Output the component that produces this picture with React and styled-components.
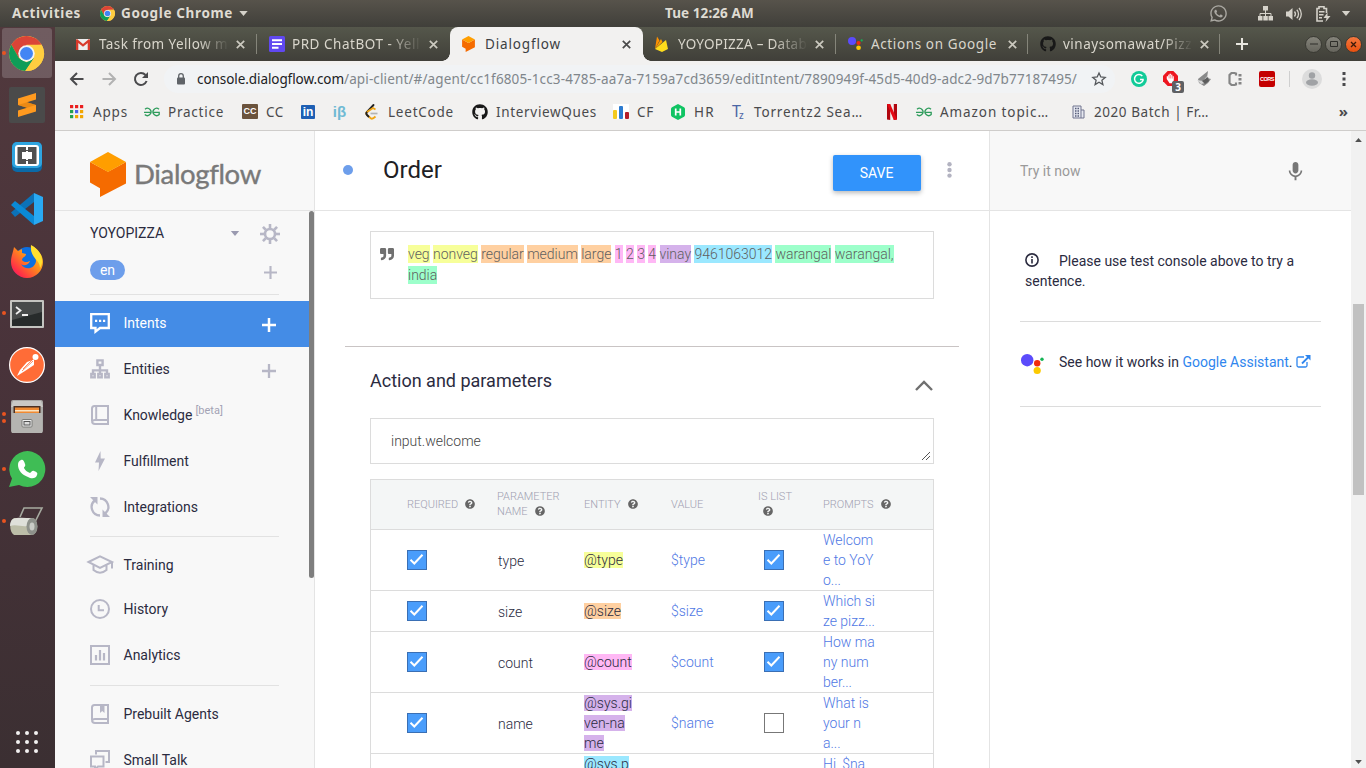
import React, { useLayoutEffect, useRef, useState } from "react";
import styled, { createGlobalStyle, css } from "styled-components";
import { FaGithub, FaQuestionCircle, FaQuoteRight, FaWhatsapp } from "react-icons/fa";
import { MdMic } from "react-icons/md";

const Global = createGlobalStyle`
  * { box-sizing: border-box; }
  body { margin: 0; overflow: hidden; font-family: Roboto, "Liberation Sans", sans-serif; }
  svg { display: block; flex: none; overflow: visible; }
`;

/* ---------- text that settles to a given width ---------- */
const FitSpan = styled.span`
  display: inline-block;
  white-space: pre;
  flex: none;
`;
function Fit({ w, children, ...rest }) {
  const ref = useRef(null);
  const [spacing, setSpacing] = useState(0);
  useLayoutEffect(() => {
    const el = ref.current;
    const n = el.textContent.length;
    setSpacing((w - el.getBoundingClientRect().width) / n);
  }, [w]);
  return (
    <FitSpan ref={ref} style={{ letterSpacing: spacing }} {...rest}>
      {children}
    </FitSpan>
  );
}

/* ---------- desktop ---------- */
const Desktop = styled.div`
  width: 1366px;
  height: 768px;
  overflow: hidden;
  display: flex;
  flex-direction: column;
  background: #fff;
`;
const TopBar = styled.header`
  height: 27px;
  flex: none;
  display: grid;
  grid-template-columns: 665px 94px 1fr;
  align-items: center;
  background: linear-gradient(#57534b, #403f3a);
  color: #dfdbd2;
  font: bold 13.5px/27px "Noto Sans", "Open Sans", sans-serif;
`;
const BarLeft = styled.div`
  display: flex;
  align-items: center;
  padding-left: 12px;
`;
const AppMenu = styled.div`
  display: flex;
  align-items: center;
  gap: 6px;
  margin-left: 19px;
`;
const Tray = styled.div`
  display: flex;
  align-items: center;
  justify-content: flex-end;
  padding-right: 15px;
  color: #d5d2ca;
  & > :nth-child(1) { margin-right: 30px; color: #aaa8a2; }
  & > :nth-child(2) { margin-right: 13px; }
  & > :nth-child(3) { margin-right: 14px; }
  & > :nth-child(4) { margin-right: 10px; }
`;
const Below = styled.div`
  flex: 1;
  min-height: 0;
  display: flex;
`;
const Dock = styled.nav`
  width: 55px;
  flex: none;
  display: flex;
  flex-direction: column;
  justify-content: space-between;
  background: linear-gradient(#51393d, #49333a 45%, #3b2f32);
`;
const DockList = styled.div`
  display: flex;
  flex-direction: column;
`;
const DockSlot = styled.div`
  height: 52px;
  display: grid;
  grid-template-columns: 6px 1fr;
  align-items: center;
  position: relative;
  ${(p) =>
    p.$active &&
    css`
      &::before {
        content: "";
        position: absolute;
        inset: 1px 3px 1px 2px;
        border-radius: 3px;
        background: rgba(255, 255, 255, 0.18);
      }
    `}
  & > svg { position: relative; margin-left: 3px; }
`;
const Dots = styled.div`
  position: relative;
  display: flex;
  flex-direction: column;
  gap: 3px;
  padding-left: 2px;
`;
const Dot = styled.i`
  width: 4px;
  height: 4px;
  border-radius: 50%;
  background: #e95420;
`;
const AppsGrid = styled.div`
  display: grid;
  grid-template-columns: repeat(3, 4.4px);
  grid-auto-rows: 4.4px;
  gap: 4.6px;
  padding: 0 0 15px 16px;
  & i { background: #f3f1f1; border-radius: 50%; }
`;

/* ---------- browser ---------- */
const Browser = styled.div`
  flex: 1;
  min-width: 0;
  display: flex;
  flex-direction: column;
  font-family: "Noto Sans", "Open Sans", sans-serif;
`;
const TabStrip = styled.div`
  height: 34px;
  flex: none;
  display: flex;
  padding-left: 9px;
  background: linear-gradient(#55574b, #403f39);
`;
const TabBox = styled.div`
  width: ${(p) => p.$w || 193}px;
  flex: none;
  display: flex;
  align-items: center;
  position: relative;
  padding: 0 8px 0 12px;
  color: ${(p) => (p.$active ? "#3c4043" : "#d9d6cc")};
  background: ${(p) => (p.$active ? "#f2f1f0" : "none")};
  border-radius: 8px 8px 0 0;
  font-size: 13.5px;
  ${(p) =>
    p.$active &&
    css`
      &::before, &::after {
        content: "";
        position: absolute;
        bottom: 0;
        width: 8px;
        height: 8px;
      }
      &::before { left: -8px; background: radial-gradient(circle at 0 0, transparent 7.5px, #f2f1f0 8px); }
      &::after { right: -8px; background: radial-gradient(circle at 100% 0, transparent 7.5px, #f2f1f0 8px); }
    `}
  ${(p) => p.$sep && css`
    &::after {
      content: "";
      position: absolute;
      right: 0;
      top: 7px;
      height: 20px;
      width: 1px;
      background: #85857a;
    }
  `}
`;
const Fav = styled.div`
  width: 23px;
  height: 16px;
  flex: none;
  display: flex;
  align-items: center;
`;
const TabTitle = styled.div`
  width: 130px;
  overflow: hidden;
  white-space: nowrap;
  line-height: 20px;
  ${(p) => p.$fade && css`
    mask-image: linear-gradient(90deg, #000 ${p.$fade}px, transparent 130px);
  `}
`;
const CloseX = styled.svg`
  margin-left: 7px;
`;
const NewTab = styled.div`
  width: 85px;
  display: flex;
  align-items: center;
  padding-left: 16px;
`;
const WinButtons = styled.div`
  display: flex;
  align-items: center;
  gap: 3px;
`;
const WinButton = styled.div`
  width: 17px;
  height: 17px;
  border-radius: 50%;
  border: 1px solid #3a3a34;
  display: flex;
  align-items: center;
  justify-content: center;
  background: ${(p) => (p.$close ? "linear-gradient(#f4783f, #e8500f)" : "linear-gradient(#85847b, #66655d)")};
`;
const Toolbar = styled.div`
  height: 36px;
  flex: none;
  display: flex;
  align-items: center;
  background: #f2f1f0;
  padding-left: 14px;
`;
const NavIcons = styled.div`
  display: flex;
  gap: 16px;
  width: 95px;
`;
const Omnibox = styled.div`
  width: 951px;
  height: 28px;
  border-radius: 14px;
  background: #f1f3f5;
  display: flex;
  align-items: center;
  padding: 0 9px 0 12px;
  color: #80868b;
  font-size: 13.5px;
  & > svg:last-child { margin-left: auto; }
`;
const Lock = styled.svg`
  margin-right: 11px;
`;
const Host = styled.span`
  color: #202124;
`;
const Extensions = styled.div`
  flex: 1;
  display: grid;
  grid-template-columns: 32px 33px 32px 31px 30px 13px 40px 1fr;
  align-items: center;
  padding-left: 16px;
`;
const ExtDivider = styled.div`
  width: 1px;
  height: 16px;
  background: #cfcfcf;
`;
const ExtIcon = styled.div`
  position: relative;
  width: 16px;
  height: 16px;
`;
const Badge = styled.span`
  position: absolute;
  left: 9px;
  top: 10px;
  width: 12px;
  height: 12px;
  border-radius: 2px;
  background: #5f6063;
  color: #fff;
  font: bold 10px/12px "Noto Sans", sans-serif;
  text-align: center;
`;
const Cors = styled.div`
  width: 16px;
  height: 16px;
  border-radius: 2px;
  background: #c40000;
  color: #fff;
  font: bold 5.5px/16px "Liberation Sans", sans-serif;
  text-align: center;
  letter-spacing: -0.5px;
`;
const Bookmarks = styled.div`
  height: 34px;
  flex: none;
  display: flex;
  padding: 0 18px 4px 15px;
  background: #f2f1f0;
  border-bottom: 1px solid #cfcdcb;
  color: #4a4a4c;
  font-size: 13.5px;
  align-items: center;
`;
const Bookmark = styled.div`
  width: ${(p) => p.$w}px;
  flex: none;
  display: flex;
  align-items: center;
  height: 20px;
`;
const BookmarkIcon = styled.div`
  width: ${(p) => p.$w || 24}px;
  flex: none;
`;
const More = styled.div`
  margin: -2px 0 0 auto;
  font-size: 15px;
  font-weight: bold;
`;

/* ---------- page ---------- */
const Page = styled.div`
  flex: 1;
  min-height: 0;
  display: flex;
  font-family: Roboto, "Liberation Sans", sans-serif;
  font-size: 14px;
  color: #2b2b3f;
`;
const Sidebar = styled.aside`
  width: 260px;
  flex: none;
  display: flex;
  flex-direction: column;
  background: #f8f8f8;
  border-right: 1px solid #e4e4e4;
`;
const LogoArea = styled.div`
  height: 80px;
  flex: none;
  display: flex;
  border-bottom: 1px solid #e4e4e4;
  padding: 21px 0 0 35px;
  gap: 8px;
  color: #797979;
  font: 27.5px/43px Lato, sans-serif;
  -webkit-text-stroke: 0.4px #797979;
`;
const SideBody = styled.div`
  flex: 1;
  min-height: 0;
  display: flex;
`;
const Menu = styled.div`
  width: 254px;
  flex: none;
  overflow: hidden;
`;
const SideScroll = styled.div`
  width: 5px;
  height: 367px;
  border-radius: 3px;
  background: #7e7e7e;
`;
const AgentRow = styled.div`
  height: ${(p) => p.$h}px;
  display: flex;
  align-items: center;
  padding: 0 29px 0 35px;
`;
const AgentName = styled.div`
  width: 140px;
  margin-top: -2px;
`;
const GearSlot = styled.div`
  width: 20px;
  margin-left: auto;
`;
const AddLanguage = styled.div`
  margin: 4px 3px 0 auto;
`;
const Pill = styled.div`
  width: 35px;
  height: 20px;
  border-radius: 10px;
  background: #6d9eeb;
  color: #fff;
  text-align: center;
  line-height: 20px;
`;
const SideRule = styled.div`
  height: 1px;
  margin: ${(p) => p.$m} 30px ${(p) => p.$b} 35px;
  background: #e2e2e2;
`;
const MenuItem = styled.div`
  height: ${(p) => p.$h || 46}px;
  display: flex;
  align-items: center;
  padding: 0 33px 2px 35px;
  background: ${(p) => (p.$active ? "#448ce6" : "none")};
  color: ${(p) => (p.$active ? "#fff" : "#b7b7c6")};
`;
const MenuLabel = styled.div`
  display: flex;
  align-items: center;
  flex: 1;
  margin-left: 13.5px;
  color: ${(p) => (p.$active ? "#fff" : "#2b2b3f")};
`;
const MenuAdd = styled.div`
  padding-top: 3px;
`;
const Beta = styled.sup`
  margin: -8px 0 0 3px;
  font-size: 11px;
  line-height: 12px;
  color: #a3a3b5;
`;
const Main = styled.main`
  width: 675px;
  flex: none;
  display: flex;
  flex-direction: column;
  border-right: 1px solid #e4e4e4;
  background: #fff;
`;
const MainHead = styled.div`
  height: 80px;
  flex: none;
  display: flex;
  align-items: center;
  padding: 0 0 1px 28px;
  border-bottom: 1px solid #e4e4e4;
`;
const StatusDot = styled.div`
  width: 10px;
  height: 10px;
  border-radius: 50%;
  background: #6d9eeb;
`;
const IntentName = styled.h1`
  width: 450px;
  margin: 0 0 0 30px;
  font-size: 24px;
  font-weight: 400;
  line-height: 30px;
  color: #202024;
`;
const Save = styled.button`
  width: 88px;
  height: 36px;
  margin-top: 6px;
  padding: 0 1px 0 0;
  border: 0;
  border-radius: 2px;
  background: #3193fb;
  color: #fff;
  font: 14px Roboto, sans-serif;
  box-shadow: 0 2px 5px rgba(0, 0, 0, 0.28);
`;
const Kebab = styled.svg`
  margin-left: 26px;
`;
const MainBody = styled.div`
  flex: 1;
  min-height: 0;
  overflow: hidden;
  padding: 20px 55px 0;
`;
const Phrase = styled.div`
  height: 68px;
  display: flex;
  padding: 12px 20px 0 9px;
  border: 1px solid #dcdcdc;
  font-weight: 300;
  line-height: 21px;
  letter-spacing: -0.015px;
  color: #5f5f5f;
  & > svg { margin: 3px 14px 0 0; }
`;
const PhraseText = styled.div`
  width: 500px;
`;
const Mark = styled.span`
  background: ${(p) => p.$c};
  padding: ${(p) => (p.$tight ? 0 : "1px 0")};
`;
const SectionRule = styled.div`
  height: 1px;
  margin: 47px -25px 0;
  background: #c9c4c4;
`;
const SectionHead = styled.div`
  height: 71px;
  display: flex;
  justify-content: space-between;
  padding: 22px 1px 0 0;
  font-size: 18px;
  line-height: 24px;
  & > svg { margin-top: 11px; }
`;
const ActionField = styled.div`
  height: 46px;
  display: flex;
  align-items: flex-end;
  justify-content: space-between;
  border: 1px solid #dcdcdc;
  padding: 0 3px 3px 20px;
  font-weight: 300;
  line-height: 37px;
  color: #444;
`;
const Table = styled.div`
  margin-top: 15px;
  border: 1px solid #dcdcdc;
`;
const Row = styled.div`
  height: ${(p) => p.$h}px;
  display: grid;
  grid-template-columns: 90px 87px 87px 87px 65px 1fr;
  align-items: center;
  padding-left: 36px;
  border-bottom: 1px solid #dcdcdc;
  font-weight: 300;
  line-height: 20px;
  color: #2b2b3f;
`;
const HeadRow = styled(Row)`
  background: #f4f6f6;
  color: #a5a5b5;
  font-size: 11px;
  line-height: 15px;
`;
const HeadCell = styled.div`
  display: flex;
  flex-wrap: wrap;
  align-items: center;
  color: #a0a0b1;
  & svg { display: inline-block; vertical-align: -1px; margin-left: ${(p) => (p.$wrap ? 5 : 7)}px; color: #666; }
  & > div { width: 80px; margin-top: -2px; }
`;
const Cell = styled.div`
  padding: ${(p) => p.$pad || 0};
`;
const EntityCell = styled.div`
  width: 50px;
  white-space: pre;
`;
const Blue = styled.div`
  white-space: pre;
  color: #4f78e4;
`;
const Check = styled.div`
  width: 20px;
  height: 20px;
  margin-left: ${(p) => p.$ml || 0}px;
  border: 1px solid ${(p) => (p.$on ? "#3a6fb4" : "#777")};
  background: ${(p) => (p.$on ? "#4a9dfb" : "#fff")};
`;
const TryPanel = styled.section`
  width: 361px;
  flex: none;
  background: #fff;
`;
const TryHead = styled.div`
  height: 80px;
  display: flex;
  align-items: center;
  justify-content: space-between;
  padding: 0 44px 0 30px;
  background: #f8f8f8;
  border-bottom: 1px solid #e4e4e4;
  color: #9a9a9a;
  & > svg { margin-top: 2px; }
`;
const TryBody = styled.div`
  padding: 40px 30px 0;
  line-height: 20px;
`;
const Hint = styled.div`
  height: 70px;
  padding-left: 5px;
  & svg { display: inline-block; vertical-align: -1px; margin-right: 20px; }
`;
const TryRow = styled.div`
  height: 86px;
  display: flex;
  align-items: center;
  border: solid #dcdcdc;
  border-width: 1px 0;
  padding-bottom: 4px;
  white-space: pre;
  & > svg:first-child { margin: 3px 15px 0 1px; }
  & > svg:last-child { margin: 0 0 2px 3px; }
`;
const Link = styled.a`
  color: #2f86ee;
`;
const PageScroll = styled.div`
  width: 15px;
  flex: none;
  display: flex;
  flex-direction: column;
  align-items: center;
  background: #f1f1f1;
  padding: 7px 0 4px;
  & > svg:last-child { margin-top: auto; }
`;
const Thumb = styled.div`
  width: 11px;
  height: 191px;
  margin-top: 162px;
  background: #c1c1c1;
`;

/* ---------- drawings ---------- */
const Chrome = ({ s }) => (
  <svg width={s} height={s} viewBox="0 0 34 34">
    <circle cx="17" cy="17" r="17" fill="#f9c940" />
    <path d="M2.3 8.5A17 17 0 0 1 31.7 8.5L17 9.3 9.6 21.3z" fill="#db4437" />
    <path d="M2.3 8.5A17 17 0 0 0 15.8 34L24.4 21.3 17 25.5 9.6 21.3z" fill="#0f9d58" />
    <path d="M31.7 8.5H17V17L24.4 21.3 15.8 34A17 17 0 0 0 31.7 8.5z" fill="#ffcd40" />
    <circle cx="17" cy="17" r="8" fill="#f4f4f4" />
    <circle cx="17" cy="17" r="6.3" fill="#4285f4" />
  </svg>
);
const Sublime = () => (
  <svg width="36" height="36" viewBox="0 0 36 36">
    <rect width="36" height="36" rx="2" fill="#4a4a4a" />
    <path d="M9 11.5 27 6v6.5L18 15.3l9 2.7v6.5L9 30v-6.5l9-2.8-9-2.7z" fill="#ff9a1f" />
    <path d="m9 18 9-2.7 9 2.7-9 2.7z" fill="#e07e0d" opacity=".6" />
  </svg>
);
const Brackets = () => (
  <svg width="36" height="32" viewBox="0 0 36 32">
    <rect x="3" y="1" width="30" height="30" rx="5" fill="#0b6aa8" />
    <rect x="3" y="1" width="30" height="26" rx="5" fill="#2fa4df" />
    <rect x="6" y="4" width="24" height="21" rx="3" fill="#fff" />
    <rect x="8.5" y="6" width="19" height="17" fill="#505050" />
    <path d="M13 11h4v-1h2v1h4v7h-4v1h-2v-1h-4z" fill="#fff" />
    <path d="M17 6h2v3h-2zM17 20h2v3h-2z" fill="#fff" />
  </svg>
);
const VsCode = () => (
  <svg width="36" height="34" viewBox="0 0 36 34">
    <path d="m25 1 9 4v24l-9 4z" fill="#29a9f2" />
    <path d="M25 1v9L6 25l-4-4.5z" fill="#0c72b8" />
    <path d="m6 9 19 15v9L2 13z" fill="#0a8ad6" />
  </svg>
);
const Firefox = () => (
  <svg width="36" height="34" viewBox="0 0 36 34">
    <defs>
      <linearGradient id="ff" x1="1" y1="0" x2="0" y2="1">
        <stop offset="0" stopColor="#ffe226" />
        <stop offset=".45" stopColor="#ff8a1c" />
        <stop offset=".8" stopColor="#ff2d48" />
        <stop offset="1" stopColor="#d61590" />
      </linearGradient>
    </defs>
    <circle cx="18" cy="15" r="12" fill="#0d6fe0" />
    <path d="M5 3 9 7l4-2v4l4 1c0 3-4 3-4 6 2 3 6 2 8 1-2 5-7 5-9 3 4 7 14 5 15-3 0-6-6-7-5-15 4 1 7 4 8 6 2 2 4 6 4 10a16 16 0 0 1-32 0C2 12 4 9 5 3z" fill="url(#ff)" />
    <path d="M22 1c4 2 8 6 10 10 2 6 1 10-1 13 0-9-10-9-9-23z" fill="#ffe030" />
  </svg>
);
const Terminal = () => (
  <svg width="36" height="30" viewBox="0 -1 36 30">
    <rect x="1" y="1" width="34" height="28" rx="1" fill="#c4c4c0" />
    <rect x="3" y="3" width="30" height="24" fill="#272b2b" />
    <path d="M3 3h30v10L3 21z" fill="#474a4a" />
    <path d="m7 8 4.5 3.5L7 15M13 16h6" fill="none" stroke="#eee" strokeWidth="1.8" />
  </svg>
);
const Postman = () => (
  <svg width="36" height="36" viewBox="0 0 36 36">
    <circle cx="18" cy="18" r="17.4" fill="#ff6c37" stroke="#fff" strokeWidth="1.2" />
    <circle cx="26.5" cy="10" r="3" fill="#fff" />
    <path d="m25 12.500-7 2.500-7 8-3 6 8-5 9-6z" fill="#fff" />
    <path d="m14 22 9-9M13 24l11-10" stroke="#ff6c37" strokeWidth=".8" />
  </svg>
);
const Files = () => (
  <svg width="36" height="36" viewBox="0 0 36 36">
    <rect x="2" y="1" width="32" height="33" rx="2" fill="#aaa9a6" />
    <path d="M4 2h28l2 6H2z" fill="#c9c8c5" />
    <rect x="4.500" y="7" width="27" height="7" fill="#4a3124" />
    <path d="M6 8.500h24V14H6z" fill="#f08a32" />
    <path d="M6 11h24v1.500H6z" fill="#fbe3c0" />
    <path d="M3 14h30v20H3z" fill="#b5b4b1" />
    <rect x="13" y="20.500" width="10" height="7.500" rx="1" fill="#eee" stroke="#7b7b78" />
    <rect x="15" y="22.500" width="6" height="3.500" fill="#ddd" stroke="#555" />
  </svg>
);
const WhatsApp = () => (
  <svg width="36" height="36" viewBox="0 0 36 36">
    <path d="M0 36 3 27.5A18 18 0 1 1 10 34z" fill="#3fbd55" />
    <path d="M12 9c2-1 3 1 4 4 1 2-1 3-1 4 1 2 3 4 6 5 1 0 2-3 4-2 3 1 4 2 3 4-1 4-6 4-9 2C13 24 9 19 9 14c0-3 1-4 3-5z" fill="#fff" />
  </svg>
);
const Roller = () => (
  <svg width="36" height="30" viewBox="0 0 36 30">
    <path d="m11 11 4-9h18l-9 18" fill="none" stroke="#a6aaa0" strokeWidth="1.6" />
    <path d="M5 12h18a5 8 0 0 1 0 17H5C0 26 0 15 5 12z" fill="#bcbda8" />
    <path d="M4 13c4-2 12-1 19-1l-5 8c-5 1-11-2-17 0 0-3 1-6 3-7z" fill="#dfe0da" />
    <ellipse cx="23" cy="20.5" rx="5.5" ry="8.5" fill="#8e918b" />
    <ellipse cx="23" cy="20.5" rx="2.5" ry="4" fill="#c9cbc6" />
  </svg>
);
const Caret = ({ w = 9, h = 5, c = "#d5d2ca", up }) => (
  <svg width={w} height={h} viewBox="0 0 10 6">
    <path d={up ? "M0 6h10L5 0z" : "M0 0h10L5 6z"} fill={c} />
  </svg>
);
const NetworkIcon = () => (
  <svg width="15" height="15" viewBox="0 0 15 15">
    <path d="M5 0h5v4.5H5zM0 10h4.5v4.5H0zM5.3 10h4.5v4.5H5.3zM10.5 10H15v4.5h-4.5z" fill="currentColor" />
    <path d="M7.5 4v6M2 10V7.5h11V10" fill="none" stroke="currentColor" />
  </svg>
);
const Speaker = () => (
  <svg width="16" height="14" viewBox="0 0 16 14">
    <path d="M0 4.5h2.5L6.5 1v12L2.5 9.5H0z" fill="currentColor" />
    <path d="M8.5 4.5a4 4 0 0 1 0 5M10.8 2.8a6 6 0 0 1 0 8.4M13 1a9 9 0 0 1 0 12" fill="none" stroke="currentColor" strokeWidth="1.3" />
  </svg>
);
const Battery = () => (
  <svg width="15" height="16" viewBox="0 0 15 16">
    <path d="M7 15H1V2.5h2V.8h5v1.7h2.5V7" fill="none" stroke="currentColor" strokeWidth="1.6" />
    <path d="M3 5h5.5v1.5H3zM3 8h4.5v1.5H3zM3 11h3v1.5H3zM11.5 6.5 7.5 12h3l-1 4 5-6h-3z" fill="currentColor" />
  </svg>
);
const Gmail = () => (
  <svg width="14" height="11" viewBox="0 0 14 11">
    <rect width="14" height="11" rx="1" fill="#eee" />
    <path d="M0 11V1l1-1 6 5 6-5 1 1v10h-2.3V4L7 7.8 2.3 4v7z" fill="#d93a2b" />
  </svg>
);
const Doc = () => (
  <svg width="16" height="16" viewBox="0 0 16 16">
    <rect width="16" height="16" rx="1.5" fill="#6048f0" />
    <path d="M3 3.2h10v2H3zM3 7h10v2H3zM3 10.8h6.5v2H3z" fill="#fff" />
  </svg>
);
const DfLogo = ({ w, h }) => (
  <svg width={w} height={h} viewBox="0 0 36 45">
    <path d="M0 10 18 19.8 36 10v21.5L10 45V36.2L0 30.5z" fill="#f56b00" />
    <path d="M18 0 36 10 18 20 0 10z" fill="#ff9e00" />
  </svg>
);
const Firebase = () => (
  <svg width="13" height="16" viewBox="0 0 13 16">
    <path d="M0 13 2 .6l2.5 4z" fill="#ff9100" />
    <path d="m0 13 6-10 1.5 3z" fill="#ffa000" />
    <path d="m0 13 11-9 2 9-6 3z" fill="#ffdd1c" />
  </svg>
);
const Assistant = ({ w }) => (
  <svg width={w} height={(w * 20) / 23} viewBox="0 0 23 20">
    <circle cx="6.2" cy="6.2" r="6.2" fill="#5b4bfb" />
    <circle cx="16.2" cy="9.2" r="3.2" fill="#f12b0e" />
    <circle cx="21" cy="5.3" r="1.7" fill="#14b455" />
    <circle cx="16.2" cy="16.5" r="3.6" fill="#fcca00" />
  </svg>
);
const XIcon = ({ c }) => (
  <CloseX width="9" height="9" viewBox="0 0 9 9">
    <path d="m.8.8 7.400 7.400M8.200.8.8 8.200" stroke={c} strokeWidth="1.7" />
  </CloseX>
);
const Plus = ({ s = 14, w = 2, c = "currentColor" }) => (
  <svg width={s} height={s} viewBox="0 0 14 14">
    <path d="M7 0v14M0 7h14" stroke={c} strokeWidth={w} />
  </svg>
);
const Gfg = () => (
  <svg width="16" height="10" viewBox="0 0 16 10">
    <path d="M1 2.2A3.6 3.6 0 1 1 .8 7.5M0 5.3h7.5M15 2.2a3.6 3.6 0 1 0 .2 5.3V5.3H8.5" fill="none" stroke="#2f9c5c" strokeWidth="1.3" />
  </svg>
);
const IconText = styled.div`
  width: ${(p) => p.$w}px;
  height: ${(p) => p.$h || 16}px;
  border-radius: 1px;
  background: ${(p) => p.$bg || "none"};
  color: ${(p) => p.$c || "#fff"};
  font: bold ${(p) => p.$s}px/${(p) => p.$h || 16}px "Liberation Sans", sans-serif;
  text-align: center;
  white-space: nowrap;
`;
const TzIcon = styled.div`
  display: flex;
  align-items: flex-start;
  height: 16px;
  color: #4c66a5;
  font: 16px/15px "Noto Sans", sans-serif;
  & small { font-size: 10px; line-height: 23px; margin-left: -2px; }
`;
const AppsIcon = () => (
  <svg width="13" height="13" viewBox="0 0 13 13">
    {["#ea1f1f", "#ea1f1f", "#ea1f1f", "#24a04d", "#4a63e8", "#f2a600", "#24a04d", "#f2a600", "#f2a600"].map((c, i) => (
      <rect key={i} x={(i % 3) * 5} y={Math.floor(i / 3) * 5} width="3.2" height="3.2" fill={c} />
    ))}
  </svg>
);
const Leet = () => (
  <svg width="14" height="16" viewBox="0 0 14 16">
    <path d="M8.5 1 2 8" fill="none" stroke="#222" strokeWidth="1.9" strokeLinecap="round" />
    <path d="M10.5 5.5 8 4 2 8c-1 1-1 2 0 3l4 3.500c1 .5 2 .5 4.500-2" fill="none" stroke="#f0a514" strokeWidth="1.9" />
    <path d="M2 8c-1 1-1 2 0 3l2 2" fill="none" stroke="#222" strokeWidth="1.9" />
    <path d="M5.500 9.500h7" stroke="#b3b3b3" strokeWidth="1.7" />
  </svg>
);
const CfIcon = () => (
  <svg width="16" height="15" viewBox="0 0 16 15">
    <rect width="16" height="15" fill="#fff" />
    <rect x="0" y="6" width="4" height="9" rx="1" fill="#f3c91d" />
    <rect x="6" y="2" width="4" height="13" rx="1" fill="#2c7bd0" />
    <rect x="12" y="8" width="4" height="7" rx="1" fill="#b41d28" />
  </svg>
);
const Hacker = () => (
  <svg width="14" height="16" viewBox="0 0 14 16">
    <path d="m7 0 6 3.300q1 .7 1 1.700v6q0 1-1 1.700L7 16l-6-3.300Q0 12 0 11V5q0-1 1-1.700z" fill="#10c463" />
    <path d="M4.700 4.500v7M9.300 4.500v7M4.700 8h4.600" stroke="#fff" strokeWidth="1.7" />
  </svg>
);
const Netflix = () => (
  <svg width="10" height="16" viewBox="0 0 10 16">
    <path d="M0 0h3.200v16L0 15.600zM6.800 0H10v15.600l-3.200.4z" fill="#b1060f" />
    <path d="M0 0h3.200L10 15.600 6.800 16z" fill="#e50914" />
  </svg>
);
const Office = () => (
  <svg width="13" height="14" viewBox="0 0 13 14">
    <path d="M1 1h8v12H1zM9 5h3v8H9" fill="#e6e8f0" stroke="#70758f" />
    <path d="M3 3.500h4M3 6h4M3 8.500h4M3 11h4" stroke="#555b78" strokeDasharray="1.5 1" strokeWidth="1.3" />
  </svg>
);
const G = {
  fill: "none",
  stroke: "currentColor",
  strokeWidth: 2,
};
const sideIcons = {
  intents: (
    <svg width="20" height="20" viewBox="0 0 20 20">
      <path d="M1.200 1.200h17.600V15H10l-4.500 3.600V15H1.200z" {...G} strokeWidth="2.3" />
      <path d="M5 6.800h2.200V9H5zM9 6.800h2.200V9H9zM13 6.800h2.200V9H13z" fill="currentColor" />
    </svg>
  ),
  entities: (
    <svg width="20" height="20" viewBox="0 0 20 20">
      <path d="M7.400 1.400h5.200v4.600H7.400zM1.300 15h3.400v3.400H1.300zM8.300 15h3.400v3.400H8.300zM15.300 15h3.400v3.400h-3.400zM10 6.500V15M3 15v-3.600h14V15" {...G} strokeWidth="2.4" />
    </svg>
  ),
  knowledge: (
    <svg width="20" height="20" viewBox="0 0 20 20">
      <path d="M18 15V1H4.500Q2 1 2 3.500V16q0 3 3 3h13v-4H5q-2.500 0-3 2M6.200 1v14" {...G} />
    </svg>
  ),
  fulfillment: (
    <svg width="20" height="20" viewBox="0 0 20 20">
      <path d="M10.500 0 5 11.500h4L8.500 20 15 7.500h-4.300z" fill="currentColor" />
    </svg>
  ),
  integrations: (
    <svg width="20" height="20" viewBox="0 0 20 20">
      <path d="M10 1.500a8.500 8.500 0 0 1 5.300 15M10 18.500a8.500 8.500 0 0 1-5.300-15" {...G} strokeWidth="2.3" />
      <path d="M0 0h7.500v7.500zM20 20h-7.500v-7.500z" fill="currentColor" />
    </svg>
  ),
  training: (
    <svg width="20" height="20" viewBox="0 0 20 20">
      <path d="M-1.500 7 10 1.300 22 7 10 12.800zM22 7v6.500M3.500 9.500V15Q10 20.500 16.500 15V9.500" {...G} />
    </svg>
  ),
  history: (
    <svg width="20" height="20" viewBox="0 0 20 20">
      <circle cx="10" cy="10" r="9" {...G} />
      <path d="M8.700 6v5.200h5.300" {...G} />
    </svg>
  ),
  analytics: (
    <svg width="20" height="20" viewBox="0 0 20 20">
      <path d="M1 1h18v18H1z" {...G} />
      <path d="M6 10v5.500M10 5v10.500M14 8v7.500" {...G} strokeWidth="2.2" />
    </svg>
  ),
  prebuilt: (
    <svg width="20" height="20" viewBox="0 0 20 20">
      <path d="M18 15V1H4.500Q2 1 2 3.500V16q0 3 3 3h13v-4H5q-2.500 0-3 2" {...G} />
      <path d="M10 1h4.500v8L12.200 7 10 9z" fill="currentColor" />
    </svg>
  ),
  talk: (
    <svg width="20" height="20" viewBox="0 0 20 20">
      <path d="M6 4.500V1h13v11h-3.500M1 6.500h12.500v10H8L5 19.500v-3H1z" {...G} />
    </svg>
  ),
};
const Gear = () => (
  <svg width="20" height="20" viewBox="0 0 20 20">
    <g stroke="#b7b7c6" fill="none">
      <circle cx="10" cy="10" r="5" strokeWidth="2.6" />
      {[0, 45, 90, 135, 180, 225, 270, 315].map((a) => (
        <path key={a} d="M10 4V0" strokeWidth="2.6" transform={`rotate(${a} 10 10)`} />
      ))}
    </g>
  </svg>
);

/* ---------- data ---------- */
const tabs = [
  { icon: <Gmail />, title: "Task from Yellow m", w: 129, fade: 100, sep: true },
  { icon: <Doc />, title: "PRD ChatBOT - Yell", w: 128, fade: 95 },
  { icon: <DfLogo w={13} h={16} />, title: "Dialogflow", w: 76, active: true },
  { icon: <Firebase />, title: "YOYOPIZZA – Datab", w: 129, fade: 95, sep: true },
  { icon: <Assistant w={15} />, title: "Actions on Google", w: 126, sep: true },
  { icon: <FaGithub size={16} color="#181818" />, title: "vinaysomawat/Pizz", w: 129, fade: 100, sep: true },
];
const bookmarks = [
  { icon: <AppsIcon />, iw: 23, text: "Apps", tw: 35, w: 74 },
  { icon: <Gfg />, text: "Practice", tw: 56, w: 98 },
  { icon: <IconText $w={16} $h={15} $bg="#6b533c" $s={9}>CC</IconText>, text: "CC", tw: 18, w: 59 },
  { icon: <IconText $w={14} $h={14} $bg="#1e5fb4" $s={12}>in</IconText>, w: 30 },
  { icon: <IconText $w={17} $c="#6fbad4" $s={15}>iβ</IconText>, w: 34 },
  { icon: <Leet />, iw: 23, text: "LeetCode", tw: 66, w: 107 },
  { icon: <FaGithub size={16} color="#181818" />, text: "InterviewQues", tw: 101, w: 141 },
  { icon: <CfIcon />, text: "CF", tw: 17, w: 58 },
  { icon: <Hacker />, iw: 23, text: "HR", tw: 21, w: 61 },
  { icon: <TzIcon>T<small>z</small></TzIcon>, iw: 22, text: "Torrentz2 Sea…", tw: 109, w: 155 },
  { icon: <Netflix />, w: 29 },
  { icon: <Gfg />, text: "Amazon topic…", tw: 109, w: 156 },
  { icon: <Office />, iw: 22, text: "2020 Batch | Fr…", tw: 115, w: 140 },
];
const dock = [
  { icon: <Chrome s={35} />, dots: 1, active: true },
  { icon: <Sublime /> },
  { icon: <Brackets /> },
  { icon: <VsCode /> },
  { icon: <Firefox /> },
  { icon: <Terminal />, dots: 1 },
  { icon: <Postman /> },
  { icon: <Files />, dots: 2 },
  { icon: <WhatsApp />, dots: 1 },
  { icon: <Roller />, dots: 1 },
];
const Y = "#f7ff9a", O = "#ffd0a1", P = "#ffb8f5", V = "#d5b2eb", B = "#9be8ff", N = "#9dffcb";
const phrase = [
  ["veg", Y], ["nonveg", Y], ["regular", O], ["medium", O], ["large", O], ["1", P], ["2", P], ["3", P], ["4", P],
  ["vinay", V], ["9461063012", B], ["warangal", N], ["warangal, india", N],
];
const params = [
  { h: 61, name: "type", entity: "@type", c: Y, value: "$type", list: true, prompt: "Welcom\ne to YoY\no..." },
  { h: 41, name: "size", entity: "@size", c: O, value: "$size", list: true, prompt: "Which si\nze pizz..." },
  { h: 61, name: "count", entity: "@count", c: P, value: "$count", list: true, prompt: "How ma\nny num\nber..." },
  { h: 61, name: "name", entity: "@sys.gi\nven-na\nme", c: V, value: "$name", list: false, prompt: "What is\nyour n\na..." },
];
const Partial = styled(Row)`
  align-items: start;
  border-bottom: 0;
  & > div { grid-row: 1; }
  & > div:first-child { grid-column: 3; }
  & > div:last-child { grid-column: 6; }
`;

const Box = ({ on, ml }) => (
  <Check $on={on} $ml={ml}>
    {on && (
      <svg width="18" height="18" viewBox="0 0 18 18">
        <path d="m2.500 8.800 3.800 3.700 8.200-8.700" fill="none" stroke="#fff" strokeWidth="2" />
      </svg>
    )}
  </Check>
);
const Item = ({ icon, children, active, plus, h }) => (
  <MenuItem $active={active} $h={h}>
    {sideIcons[icon]}
    <MenuLabel $active={active}>{children}</MenuLabel>
    {plus && <MenuAdd><Plus s={14} w={active ? 2.5 : 2.3} /></MenuAdd>}
  </MenuItem>
);
const Help = () => <FaQuestionCircle size={10} />;

export default function App() {
  return (
    <Desktop>
      <Global />
      <TopBar>
        <BarLeft>
          <Fit w={69}>Activities</Fit>
          <AppMenu>
            <Chrome s={15} />
            <Fit w={112}>Google Chrome</Fit>
            <Caret />
          </AppMenu>
        </BarLeft>
        <Fit w={95}>Tue 12:26 AM</Fit>
        <Tray>
          <FaWhatsapp size={19} />
          <NetworkIcon />
          <Speaker />
          <Battery />
          <Caret w={10} />
        </Tray>
      </TopBar>
      <Below>
        <Dock>
          <DockList>
            {dock.map((d, i) => (
              <DockSlot key={i} $active={d.active}>
                <Dots>
                  {Array.from({ length: d.dots || 0 }, (_, k) => <Dot key={k} />)}
                </Dots>
                {d.icon}
              </DockSlot>
            ))}
          </DockList>
          <AppsGrid>{Array.from({ length: 9 }, (_, i) => <i key={i} />)}</AppsGrid>
        </Dock>
        <Browser>
          <TabStrip>
            {tabs.map((t, i) => (
              <TabBox key={t.title} $active={t.active} $sep={t.sep} $w={i > 3 ? 192 : 193}>
                <Fav>{t.icon}</Fav>
                <TabTitle $fade={t.fade}><Fit w={t.w}>{t.title}</Fit></TabTitle>
                <XIcon c={t.active ? "#4a4a4a" : "#cbc9bf"} />
              </TabBox>
            ))}
            <NewTab><Plus s={12} w={2.4} c="#e8e6df" /></NewTab>
            <WinButtons>
              <WinButton><svg width="8" height="8"><path d="M0 4h8" stroke="#2e2e2a" /></svg></WinButton>
              <WinButton><svg width="8" height="7"><path d="M.5.5h7v5h-7z" fill="none" stroke="#2e2e2a" /></svg></WinButton>
              <WinButton $close><svg width="7" height="7"><path d="m1 1 5 5M6 1 1 6" stroke="#3b1a0a" strokeWidth="1.3" /></svg></WinButton>
            </WinButtons>
          </TabStrip>
          <Toolbar>
            <NavIcons>
              <svg width="16" height="16" viewBox="0 0 16 16"><path d="M14.500 8H2.500M8 2 2 8l6 6" fill="none" stroke="#4a4a4c" strokeWidth="2" /></svg>
              <svg width="16" height="16" viewBox="0 0 16 16"><path d="M1.500 8h12M8 2l6 6-6 6" fill="none" stroke="#b2b2b2" strokeWidth="2" /></svg>
              <svg width="16" height="16" viewBox="0 0 16 16"><path d="M13.600 10A6 6 0 1 1 12.500 4" fill="none" stroke="#4a4a4c" strokeWidth="2" /><path d="M15 1v6H9z" fill="#4a4a4c" /></svg>
            </NavIcons>
            <Omnibox>
              <Lock width="10" height="12" viewBox="0 0 10 12">
                <rect x="1" y="4.5" width="8" height="7" rx="1" fill="#5f6368" />
                <path d="M2.700 5V3a2.300 2.300 0 0 1 4.600 0v2" fill="none" stroke="#5f6368" strokeWidth="1.3" />
              </Lock>
              <Host><Fit w={147}>console.dialogflow.com</Fit></Host>
              <Fit w={733}>/api-client/#/agent/cc1f6805-1cc3-4785-aa7a-7159a7cd3659/editIntent/7890949f-45d5-40d9-adc2-9d7b77187495/</Fit>
              <svg width="14" height="14" viewBox="0 0 14 14"><path d="m7 1 1.800 4 4.400.4-3.300 2.900 1 4.300L7 10.300l-3.900 2.300 1-4.300L.8 5.400 5.200 5z" fill="none" stroke="#55585c" strokeWidth="1.3" /></svg>
            </Omnibox>
            <Extensions>
              <svg width="16" height="16" viewBox="0 0 16 16"><circle cx="8" cy="8" r="8" fill="#12cb98" /><path d="M11.300 5a4.400 4.400 0 1 0 .7 4.500V8.500H9" fill="none" stroke="#fff" strokeWidth="1.5" /></svg>
              <ExtIcon>
                <svg width="15" height="15" viewBox="0 0 16 16"><path d="M5 0h6l5 5v6l-5 5H5l-5-5V5z" fill="#ee1620" /><path d="M4 8.500V5.500h1.400V4h1.500V3h1.700v1h1.500v1.500h1.400V10l-2 3H7z" fill="#fff" /><path d="M6.500 4v4M8.200 4v4M9.900 4.500V8" stroke="#ee1620" strokeWidth=".5" /></svg>
                <Badge>3</Badge>
              </ExtIcon>
              <svg width="15" height="16" viewBox="0 0 15 16"><path d="M12 0 2 8l1 4 5 3 4-3 3-4-4-1z" fill="#8a8a8a" /><path d="m1 9 6 1 4-5-2 7-4 1z" fill="#d6d6d6" /><path d="m6 10 3 3 4-3-1-4z" fill="#5d5d5d" /></svg>
              <svg width="14" height="14" viewBox="0 0 14 14"><path d="M8 3.500V1.500L6.500 1h-3L1.500 3v8l2 2h3L8 12.500v-2" fill="none" stroke="#858585" strokeWidth="2.2" /><path d="M10.500 2h3v2.500h-3zM10.500 6h3v2.500h-3zM10.500 10h3v2.500h-3z" fill="#858585" /></svg>
              <Cors>CORS</Cors>
              <ExtDivider />
              <svg width="20" height="20" viewBox="0 0 20 20"><circle cx="10" cy="10" r="10" fill="#dcdcdc" /><circle cx="10" cy="6.5" r="3.2" fill="#a0a2a5" /><ellipse cx="10" cy="13.5" rx="6" ry="3.2" fill="#a0a2a5" /></svg>
              <svg width="4" height="14" viewBox="0 0 4 14"><path d="M0.500 0h3v3h-3zM.5 5.500h3v3h-3zM.5 11h3v3h-3z" fill="#4a4a4c" /></svg>
            </Extensions>
          </Toolbar>
          <Bookmarks>
            {bookmarks.map((b, i) => (
              <Bookmark key={i} $w={b.w}>
                <BookmarkIcon $w={b.iw}>{b.icon}</BookmarkIcon>
                {b.text && <Fit w={b.tw}>{b.text}</Fit>}
              </Bookmark>
            ))}
            <More>»</More>
          </Bookmarks>
          <Page>
            <Sidebar>
              <LogoArea>
                <DfLogo w={36} h={45} />
                <Fit w={127}>Dialogflow</Fit>
              </LogoArea>
              <SideBody>
                <Menu>
                  <AgentRow $h={45}>
                    <AgentName>YOYOPIZZA</AgentName>
                    <Caret w={10} h={5} c="#9a9ab0" />
                    <GearSlot><Gear /></GearSlot>
                  </AgentRow>
                  <AgentRow $h={28}>
                    <Pill>en</Pill>
                    <AddLanguage><Plus s={13} w={2.3} c="#b7b7c6" /></AddLanguage>
                  </AgentRow>
                  <SideRule $m="10px" $b="6px" />
                  <Item icon="intents" active plus>Intents</Item>
                  <Item icon="entities" plus>Entities</Item>
                  <Item icon="knowledge">Knowledge<Beta>[beta]</Beta></Item>
                  <Item icon="fulfillment">Fulfillment</Item>
                  <Item icon="integrations">Integrations</Item>
                  <SideRule $m="5px" $b="7px" />
                  <Item icon="training" h={43}>Training</Item>
                  <Item icon="history">History</Item>
                  <Item icon="analytics">Analytics</Item>
                  <SideRule $m="6px" $b="6px" />
                  <Item icon="prebuilt">Prebuilt Agents</Item>
                  <Item icon="talk">Small Talk</Item>
                </Menu>
                <SideScroll />
              </SideBody>
            </Sidebar>
            <Main>
              <MainHead>
                <StatusDot />
                <IntentName>Order</IntentName>
                <Save>SAVE</Save>
                <Kebab width="5" height="16" viewBox="0 0 5 16">
                  <g fill="#b3b3c1"><circle cx="2.5" cy="2.3" r="2.2" /><circle cx="2.5" cy="8" r="2.2" /><circle cx="2.5" cy="13.6" r="2.2" /></g>
                </Kebab>
              </MainHead>
              <MainBody>
                <Phrase>
                  <FaQuoteRight size={14} color="#707070" />
                  <PhraseText>
                    {phrase.map(([t, c], i) => (
                      <React.Fragment key={i}><Mark $c={c}>{t}</Mark>{" "}</React.Fragment>
                    ))}
                  </PhraseText>
                </Phrase>
                <SectionRule />
                <SectionHead>
                  Action and parameters
                  <svg width="18" height="11" viewBox="0 0 18 11"><path d="m1 10 8-8 8 8" fill="none" stroke="#707070" strokeWidth="2.4" /></svg>
                </SectionHead>
                <ActionField>
                  input.welcome
                  <svg width="8" height="8" viewBox="0 0 8 8"><path d="M0 8 8 0M4 8l4-4" stroke="#555" /></svg>
                </ActionField>
                <Table>
                  <HeadRow $h={50}>
                    <HeadCell><span>REQUIRED<Help /></span></HeadCell>
                    <HeadCell><div>PARAMETER NAME<Help /></div></HeadCell>
                    <HeadCell><span>ENTITY<Help /></span></HeadCell>
                    <HeadCell>VALUE</HeadCell>
                    <HeadCell $wrap><div>IS LIST<br /><Help /></div></HeadCell>
                    <HeadCell><span>PROMPTS<Help /></span></HeadCell>
                  </HeadRow>
                  {params.map((p) => (
                    <Row key={p.name} $h={p.h}>
                      <Box on />
                      <Cell $pad="2px 0 0 1px">{p.name}</Cell>
                      <EntityCell><Mark $c={p.c} $tight>{p.entity}</Mark></EntityCell>
                      <Blue>{p.value}</Blue>
                      <Box on={p.list} ml={6} />
                      <Blue>{p.prompt}</Blue>
                    </Row>
                  ))}
                  <Partial $h={61}>
                    <EntityCell><Mark $c={B} $tight>@sys.p</Mark></EntityCell>
                    <Blue>Hi, $na</Blue>
                  </Partial>
                </Table>
              </MainBody>
            </Main>
            <TryPanel>
              <TryHead>
                Try it now
                <MdMic size={23} color="#777" />
              </TryHead>
              <TryBody>
                <Hint>
                  <svg width="14" height="14" viewBox="0 0 14 14"><circle cx="7" cy="7" r="6.1" fill="none" stroke="#2b2b3f" strokeWidth="1.6" /><path d="M6.200 3.300h1.600v1.600H6.200zM6.200 6h1.600v4.500H6.200z" fill="#2b2b3f" /></svg>
                  Please use test console above to try a sentence.
                </Hint>
                <TryRow>
                  <Assistant w={23} />
                  See how it works in <Link>Google Assistant</Link>.
                  <svg width="15" height="13" viewBox="0 0 15 13"><path d="M8 2H2.500Q1 2 1 3.500v7Q1 12 2.500 12h7q1.500 0 1.500-1.500V7" fill="none" stroke="#2f86ee" strokeWidth="1.3" /><path d="M9 0h5.500v5.500z" fill="#2f86ee" /><path d="m6 8.500 6.500-6.500" stroke="#2f86ee" strokeWidth="1.8" /></svg>
                </TryRow>
              </TryBody>
            </TryPanel>
            <PageScroll>
              <Caret w={7} h={4} c="#505050" up />
              <Thumb />
              <Caret w={7} h={4} c="#505050" />
            </PageScroll>
          </Page>
        </Browser>
      </Below>
    </Desktop>
  );
}
